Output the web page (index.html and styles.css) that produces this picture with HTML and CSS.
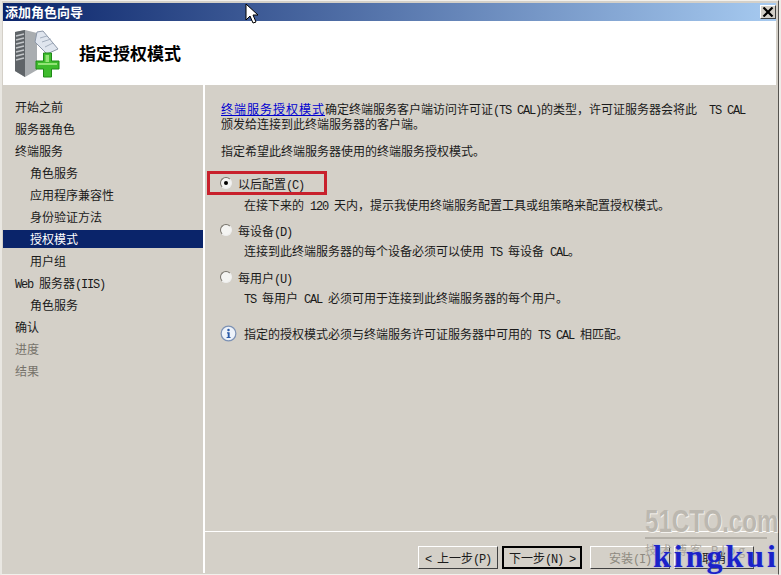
FILE: index.html

```html
<!DOCTYPE html>
<html lang="zh-CN">
<head>
    <meta charset="UTF-8">
    <title>添加角色向导</title>
    <link rel="stylesheet" href="styles.css">
</head>
<body>
    <div class="window">
        <div class="titlebar">
            <span class="title-text">添加角色向导</span>
            <span class="close-btn">
                <svg width="12" height="10" viewBox="0 0 12 10"><path d="M1.5 .5 L10.5 9.5 M10.5 .5 L1.5 9.5" stroke="#000" stroke-width="2.2" fill="none"/></svg>
            </span>
        </div>
        <header class="page-header">
            <svg class="role-icon" width="46" height="50" viewBox="0 0 46 50">
                <path d="M1 4 L11 2 L23 5 L23 42 L11 49 L1 43 Z" fill="#a9adb0"/>
                <path d="M1 4 L11 2 L11 49 L1 43 Z" fill="#5f6468"/>
                <path d="M2 8 L10 6 M2 12 L10 10 M2 16 L10 14 M2 20 L10 18 M2 24 L10 22 M2 28 L10 26 M2 32 L10 30" stroke="#c4c7ca" stroke-width="1.4"/>
                <path d="M21 14 L23 4 L29 3 L44 21 L33 26 Z" fill="#dfe5ee" stroke="#8c97a8"/>
                <path d="M26 10 L33 8 M28 14 L37 11 M31 19 L39 15" stroke="#a4afbe"/>
                <path d="M29.5 25 H37.5 V33 H45 V41 H37.5 V49 H29.5 V41 H22 V33 H29.5 Z" fill="#3ebc2c" stroke="#1f8a17"/>
                <path d="M31.5 27 H35 V34 H31.5 Z M24 35 H43 V37 H24 Z" fill="#92e476"/>
            </svg>
            <h1 class="page-title">指定授权模式</h1>
        </header>
        <div class="wizard-body">
            <nav class="steps">
                <div class="step">开始之前</div>
                <div class="step">服务器角色</div>
                <div class="step">终端服务</div>
                <div class="step sub">角色服务</div>
                <div class="step sub">应用程序兼容性</div>
                <div class="step sub">身份验证方法</div>
                <div class="step sub active">授权模式</div>
                <div class="step sub">用户组</div>
                <div class="step"><span class="lat">Web </span>服务器<span class="lat">(IIS)</span></div>
                <div class="step sub">角色服务</div>
                <div class="step">确认</div>
                <div class="step off">进度</div>
                <div class="step off">结果</div>
            </nav>
            <main class="content">
                <div class="pane">
                    <p class="intro">
                        <span class="intro-line"><a class="link" href="#">终端服务授权模式</a>确定终端服务客户端访问许可证<span class="lat">(TS CAL)</span>的类型，许可证服务器会将此<span class="lat">  TS CAL</span></span>
                        <span class="intro-line">颁发给连接到此终端服务器的客户端。</span>
                    </p>
                    <p class="prompt">指定希望此终端服务器使用的终端服务授权模式。</p>
                    <div class="option first">
                        <div class="radio-row marked">
                            <span class="radio checked"></span>
                            <span>以后配置<span class="lat">(C)</span></span>
                        </div>
                        <p class="option-desc">在接下来的<span class="lat"> 120 </span>天内，提示我使用终端服务配置工具或组策略来配置授权模式。</p>
                    </div>
                    <div class="option second">
                        <div class="radio-row">
                            <span class="radio"></span>
                            <span>每设备<span class="lat">(D)</span></span>
                        </div>
                        <p class="option-desc">连接到此终端服务器的每个设备必须可以使用<span class="lat"> TS </span>每设备<span class="lat"> CAL</span>。</p>
                    </div>
                    <div class="option">
                        <div class="radio-row">
                            <span class="radio"></span>
                            <span>每用户<span class="lat">(U)</span></span>
                        </div>
                        <p class="option-desc"><span class="lat">TS </span>每用户<span class="lat"> CAL </span>必须可用于连接到此终端服务器的每个用户。</p>
                    </div>
                    <div class="note">
                        <svg width="17" height="17" viewBox="0 0 18 18">
                            <circle cx="9" cy="9" r="7.8" fill="#eef3fa" stroke="#7d92b5" stroke-width="1.3"/>
                            <circle cx="9" cy="5.2" r="1.3" fill="#2a5aa8"/>
                            <path d="M7.4 7.8 H10.2 V12.6 H11.2 V13.8 H7 V12.6 H8.2 V9 H7.4 Z" fill="#2a5aa8"/>
                        </svg>
                        <span>指定的授权模式必须与终端服务许可证服务器中可用的<span class="lat"> TS CAL </span>相匹配。</span>
                    </div>
                </div>
                <footer class="buttons">
                    <button class="btn"><span class="lat">&lt; </span>上一步<span class="lat">(P)</span></button>
                    <button class="btn default">下一步<span class="lat">(N) &gt;</span></button>
                    <button class="btn install" disabled>安装<span class="lat">(I)</span></button>
                    <button class="btn">取消</button>
                </footer>
            </main>
        </div>
    </div>

    <svg class="cursor" width="14" height="22" viewBox="0 0 14 22">
        <path d="M1 1 L1 17 L5 13 L8 20 L11 19 L8 12 L13 12 Z" fill="#fff" stroke="#000"/>
    </svg>
    <div class="watermark">
        <div class="wm-site">51CTO.com</div>
        <div class="wm-rule"></div>
        <div class="wm-sub">技术博客 Blog</div>
        <div class="wm-name">kingkui</div>
    </div>
</body>
</html>
```

FILE: styles.css

```css
* {
    margin: 0;
    padding: 0;
    box-sizing: border-box;
}

body {
    width: 781px;
    height: 575px;
    overflow: hidden;
    position: relative;
    background: #eeece8;
    font-family: "Noto Sans CJK SC", sans-serif;
    font-size: 12px;
    color: #1a1a1a;
}

/* latin text in the shot is 6px wide per char, like a bitmap mono font */
.lat {
    font-family: "Liberation Mono", monospace;
    font-size: 12px;
    letter-spacing: -1.2px;
    line-height: 1;
    white-space: pre;
}

.window {
    width: 779px;
    height: 575px;
    padding: 2px 2px 1px 1px;
    border-top: 1px solid #f2f0ec;
    border-left: 2px solid #e9e7e2;
    border-right: 1px solid #55534f;
    border-bottom: 1px solid #f2f0ec;
    display: flex;
    flex-direction: column;
    background: #d4d0c8;
}

.titlebar {
    height: 18px;
    flex: none;
    display: flex;
    align-items: center;
    justify-content: space-between;
    padding: 0 0 0 2px;
    background: linear-gradient(90deg, #0a246a 0%, #a6caf0 100%);
}

.title-text {
    color: #fff;
    font-size: 13px;
    font-weight: 700;
    line-height: 18px;
}

.close-btn {
    width: 16px;
    height: 14px;
    display: flex;
    align-items: center;
    justify-content: center;
    background: #d4d0c8;
    border: 1px solid;
    border-color: #fff #404040 #404040 #fff;
}

.page-header {
    height: 64px;
    flex: none;
    display: flex;
    align-items: center;
    gap: 19px;
    padding-left: 11px;
    background: #fff;
}

.page-title {
    font-size: 17px;
    font-weight: 700;
    color: #000;
    margin-top: -2px;
}

.wizard-body {
    flex: 1;
    display: flex;
    min-height: 0;
}

.steps {
    width: 200px;
    flex: none;
    padding-top: 11px;
}

.step {
    height: 22px;
    line-height: 22px;
    padding-left: 12px;
}

.step.sub {
    padding-left: 27px;
}

.step.active {
    height: 18px;
    line-height: 18px;
    margin: 2px 0;
    background: #0a246a;
    color: #fff;
}

.step.off {
    color: #77736b;
}

.content {
    flex: 1;
    display: flex;
    flex-direction: column;
    border-left: 2px solid #fff;
}

.pane {
    flex: 1;
    padding: 16px 16px 0 16px;
}

.intro-line {
    display: block;
    height: 15px;
    line-height: 15px;
}

.link {
    color: #0000d0;
    letter-spacing: 1px;
}

.prompt {
    margin-top: 12px;
    line-height: 15px;
}

.option {
    margin-top: 8px;
}

.option.first {
    margin-top: 13px;
}

.option.second {
    margin-top: 7px;
}

.radio-row {
    display: flex;
    align-items: center;
    gap: 6px;
    height: 18px;
    margin-left: -1px;
}

.radio-row.marked {
    width: 120px;
    height: 24px;
    margin-left: -14px;
    margin-bottom: -2px;
    padding-left: 10px;
    border: 3px solid #c8202c;
}

.radio {
    width: 12px;
    height: 12px;
    border-radius: 50%;
    flex: none;
    background: #f4f4f2;
    border: 1px solid;
    border-color: #77736b #eee #eee #77736b;
    position: relative;
}

.radio.checked::after {
    content: '';
    position: absolute;
    left: 3px;
    top: 3px;
    width: 4px;
    height: 4px;
    border-radius: 50%;
    background: #000;
}

.option-desc {
    margin-top: 3px;
    padding-left: 23px;
    height: 18px;
    line-height: 18px;
}

.note {
    display: flex;
    align-items: center;
    gap: 7px;
    height: 18px;
    margin-top: 17px;
    margin-left: -1px;
}

.buttons {
    height: 42px;
    flex: none;
    border-top: 1px solid #fff;
    display: flex;
    gap: 4px;
    padding: 14px 0 0 213px;
}

.btn {
    width: 80px;
    height: 23px;
    font-family: inherit;
    font-size: 12px;
    color: #1a1a1a;
    background: #d4d0c8;
    border: 1px solid;
    border-color: #fff #404040 #404040 #fff;
}

.btn.default {
    border: 2px solid #000;
    margin-right: 4px;
}

.btn.install {
    color: #8d897f;
}

.cursor {
    position: absolute;
    left: 245px;
    top: 3px;
}

.watermark {
    position: absolute;
    left: 640px;
    top: 505px;
    width: 141px;
    height: 70px;
}

.wm-site {
    position: absolute;
    left: 5px;
    top: -1px;
    font-family: "Liberation Sans", sans-serif;
    font-size: 28px;
    font-weight: 700;
    line-height: 31px;
    color: #bcb8b0;
    text-shadow: 1px 1px 0 #f4f2ee;
    transform: scale(.86, 1.1);
    transform-origin: left top;
    white-space: nowrap;
}

.wm-rule {
    position: absolute;
    left: 5px;
    top: 32px;
    width: 122px;
    height: 2px;
    background: #b4b0a8;
}

.wm-sub {
    position: absolute;
    left: 5px;
    top: 36px;
    font-size: 12px;
    letter-spacing: 3px;
    color: #a8a49c;
    white-space: nowrap;
}

.wm-name {
    position: absolute;
    left: 13px;
    top: 33px;
    font-family: "Liberation Serif", serif;
    font-size: 32px;
    font-weight: 700;
    letter-spacing: 3px;
    line-height: 36px;
    color: #1b22c8;
    text-shadow: 0 0 2px #9ab0f0;
    white-space: nowrap;
}
```
